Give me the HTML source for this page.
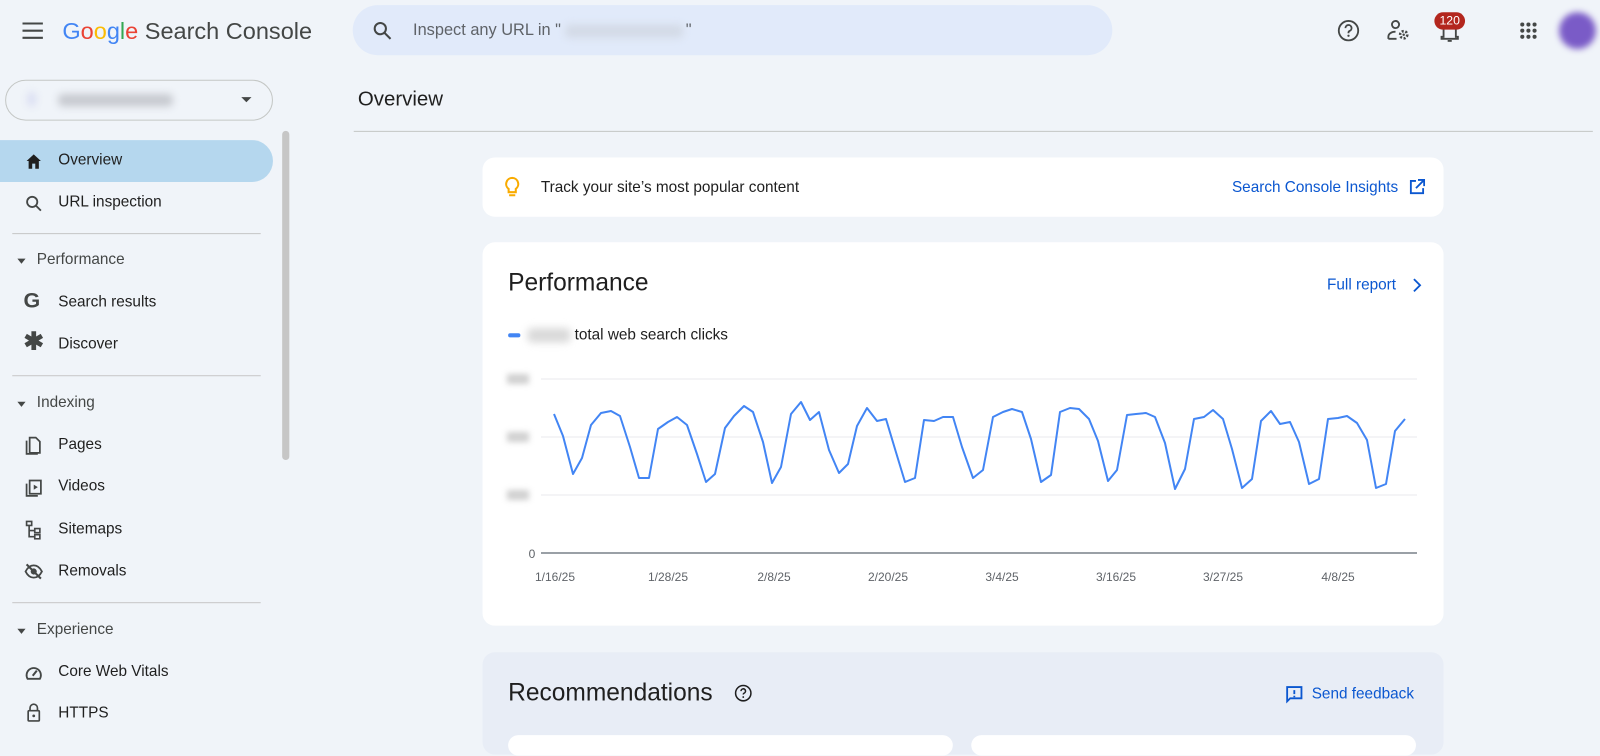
<!DOCTYPE html>
<html><head><meta charset="utf-8"><style>
*{box-sizing:border-box;margin:0;padding:0}
html,body{width:1600px;height:740px;overflow:hidden;background:#f0f4f9;font-family:"Liberation Sans",Arial,sans-serif;color:#1f1f1f}
#w{position:absolute;left:0;top:0;width:1565px;height:724px;transform:scale(1.02236);transform-origin:0 0}
.a{position:absolute}
.nav{position:absolute;left:57px;font-size:15px;color:#1f1f1f;white-space:nowrap}
.sec{position:absolute;left:36px;font-size:15px;color:#444746}
.ic{position:absolute;left:23px;width:20px;height:20px}
.car{position:absolute;left:17px;width:0;height:0;border-left:4px solid transparent;border-right:4px solid transparent;border-top:5px solid #444746}
.div{position:absolute;left:12px;width:243px;height:1px;background:#c7c7c7}
.card{position:absolute;background:#fff;border-radius:12px}
.blue{color:#0b57d0}
.blur{position:absolute;background:#c9ccd1;filter:blur(4px);border-radius:4px}
</style></head><body>
<div id="w">
<!-- header -->
<svg class="a" style="left:22px;top:21px" width="20" height="18" viewBox="0 0 20 18"><path d="M0 2h20M0 9h20M0 16h20" stroke="#444746" stroke-width="2"/></svg>
<div class="a" style="left:61px;top:17px;font-size:23px;white-space:nowrap"><span style="color:#4285f4">G</span><span style="color:#ea4335">o</span><span style="color:#fbbc05">o</span><span style="color:#4285f4">g</span><span style="color:#34a853">l</span><span style="color:#ea4335">e</span> <span style="color:#444746">Search Console</span></div>
<div class="a" style="left:345px;top:5px;width:743px;height:49px;border-radius:25px;background:#e1eafa"></div>
<svg class="a" style="left:364px;top:20px" width="20" height="20" viewBox="0 0 20 20"><circle cx="8" cy="8" r="5.5" fill="none" stroke="#444746" stroke-width="2"/><path d="M12 12l6 6" stroke="#444746" stroke-width="2"/></svg>
<div class="a" style="left:404px;top:21px;font-size:16px;color:#5f6368">Inspect any URL in "<span style="display:inline-block;width:122px"></span>"</div>
<div class="blur" style="left:553px;top:24px;width:115px;height:13px;background:#d3dae6"></div>
<svg class="a" style="left:1308px;top:19px" width="22" height="22" viewBox="0 0 22 22"><circle cx="11" cy="11" r="9.5" fill="none" stroke="#444746" stroke-width="1.8"/><path d="M8 8.5a3 3 0 1 1 4 2.8c-.8.4-1 .9-1 1.7v.5" fill="none" stroke="#444746" stroke-width="1.8"/><circle cx="11" cy="16" r="1.1" fill="#444746"/></svg>
<svg class="a" style="left:1356px;top:19px" width="24" height="22" viewBox="0 0 24 22"><circle cx="9" cy="5" r="3.5" fill="none" stroke="#444746" stroke-width="1.8"/><path d="M2 19v-2c0-3 3-5 7-5" fill="none" stroke="#444746" stroke-width="1.8"/><path d="M2 19h8" stroke="#444746" stroke-width="1.8"/><circle cx="17" cy="15" r="3.5" fill="none" stroke="#444746" stroke-width="2.5" stroke-dasharray="2 1.6"/><circle cx="17" cy="15" r="1.2" fill="#444746"/></svg>
<svg class="a" style="left:1407px;top:20px" width="22" height="22" viewBox="0 0 22 22"><path d="M5 16V9a6 6 0 0 1 12 0v7h2v2H3v-2z" fill="none" stroke="#444746" stroke-width="1.8"/><path d="M9 20h4" stroke="#444746" stroke-width="1.8"/></svg>
<div class="a" style="left:1403px;top:12px;width:30px;height:17px;border-radius:9px;background:#b3261e;color:#fff;font-size:12px;text-align:center;line-height:17px">120</div>
<svg class="a" style="left:1486px;top:21px" width="18" height="18" viewBox="0 0 18 18" fill="#444746"><circle cx="3" cy="3" r="2"/><circle cx="9" cy="3" r="2"/><circle cx="15" cy="3" r="2"/><circle cx="3" cy="9" r="2"/><circle cx="9" cy="9" r="2"/><circle cx="15" cy="9" r="2"/><circle cx="3" cy="15" r="2"/><circle cx="9" cy="15" r="2"/><circle cx="15" cy="15" r="2"/></svg>
<div class="a" style="left:1525px;top:12px;width:36px;height:36px;border-radius:50%;background:#7a5bc7;filter:blur(3px)"></div>
<!-- property -->
<div class="a" style="left:5px;top:78px;width:262px;height:40px;border:1px solid #c4c7c5;border-radius:20px"></div>
<div class="blur" style="left:27px;top:90px;width:8px;height:14px;background:#d8dcf2"></div>
<div class="blur" style="left:57px;top:92px;width:112px;height:12px;background:#c6c9cf"></div>
<div class="a" style="left:236px;top:95px;border-left:5px solid transparent;border-right:5px solid transparent;border-top:5px solid #444746"></div>
<!-- nav -->
<div class="a" style="left:0;top:137px;width:267px;height:41px;background:#b5d7ee;border-radius:0 21px 21px 0"></div>
<div class="a" style="left:276px;top:128px;width:7px;height:322px;background:#c6c6c6;border-radius:4px"></div>
<svg class="ic" style="top:148px" viewBox="0 0 20 20"><path d="M10 3l7 6.5h-2V17h-3.5v-5h-3v5H5V9.5H3z" fill="#1f1f1f"/></svg>
<div class="nav" style="top:148px;font-weight:500">Overview</div>
<svg class="ic" style="top:189px" viewBox="0 0 20 20"><circle cx="8.5" cy="8.5" r="5" fill="none" stroke="#444746" stroke-width="1.8"/><path d="M12 12l5 5" stroke="#444746" stroke-width="1.8"/></svg>
<div class="nav" style="top:189px">URL inspection</div>
<div class="div" style="top:228px"></div>
<div class="car" style="top:253px"></div><div class="sec" style="top:245px">Performance</div>
<div class="a" style="left:23px;top:283px;font-size:21px;font-weight:bold;color:#444746">G</div>
<div class="nav" style="top:287px">Search results</div>
<div class="a" style="left:23px;top:323px;font-size:24px;font-weight:bold;color:#444746;line-height:24px">✱</div>
<div class="nav" style="top:328px">Discover</div>
<div class="div" style="top:367px"></div>
<div class="car" style="top:393px"></div><div class="sec" style="top:385px">Indexing</div>
<svg class="ic" style="top:426px" viewBox="0 0 20 20"><path d="M6 2h6l4 4v11H6z M3 5v13h11" fill="none" stroke="#444746" stroke-width="1.7"/></svg>
<div class="nav" style="top:426px">Pages</div>
<svg class="ic" style="top:467px" viewBox="0 0 20 20"><path d="M6 3h11v13H6z M3 6v12h11" fill="none" stroke="#444746" stroke-width="1.7"/><path d="M10 7l4 2.5-4 2.5z" fill="#444746"/></svg>
<div class="nav" style="top:467px">Videos</div>
<svg class="ic" style="top:508px" viewBox="0 0 20 20"><path d="M3 2h5v4H3z M11 9h5v4h-5z M11 15h5v4h-5z M5.5 6v11H11 M5.5 11H11" fill="none" stroke="#444746" stroke-width="1.6"/></svg>
<div class="nav" style="top:509px">Sitemaps</div>
<svg class="ic" style="top:549px" viewBox="0 0 20 20"><path d="M2 10c2-4 5-6 8-6s6 2 8 6c-2 4-5 6-8 6s-6-2-8-6z" fill="none" stroke="#444746" stroke-width="1.8"/><circle cx="10" cy="10" r="3" fill="#444746"/><path d="M3 3l14 14" stroke="#444746" stroke-width="2"/></svg>
<div class="nav" style="top:550px">Removals</div>
<div class="div" style="top:589px"></div>
<div class="car" style="top:615px"></div><div class="sec" style="top:607px">Experience</div>
<svg class="ic" style="top:648px" viewBox="0 0 20 20"><path d="M4 16a7 7 0 1 1 12 0z" fill="none" stroke="#444746" stroke-width="1.8"/><path d="M9 13l4-5" stroke="#444746" stroke-width="2"/></svg>
<div class="nav" style="top:648px">Core Web Vitals</div>
<svg class="ic" style="top:687px" viewBox="0 0 20 22"><path d="M6 9V6a4 4 0 0 1 8 0v3" fill="none" stroke="#444746" stroke-width="1.8"/><rect x="4" y="9" width="12" height="11" rx="1" fill="none" stroke="#444746" stroke-width="1.8"/><circle cx="10" cy="14.5" r="1.5" fill="#444746"/></svg>
<div class="nav" style="top:689px">HTTPS</div>
<!-- main -->
<div class="a" style="left:350px;top:86px;font-size:20px;color:#1f1f1f">Overview</div>
<div class="a" style="left:346px;top:128px;width:1212px;height:1px;background:#c4c7c5"></div>
<div class="card" style="left:472px;top:154px;width:940px;height:58px"></div>
<svg class="a" style="left:492px;top:172px" width="18" height="24" viewBox="0 0 18 24"><path d="M9 2a6 6 0 0 0-3.5 10.8V16h7v-3.2A6 6 0 0 0 9 2z M6 19h6" fill="none" stroke="#f9ab00" stroke-width="2"/></svg>
<div class="a" style="left:529px;top:175px;font-size:15px">Track your site’s most popular content</div>
<div class="a blue" style="left:1205px;top:175px;font-size:15px">Search Console Insights</div>
<svg class="a" style="left:1378px;top:175px" width="16" height="16" viewBox="0 0 16 16"><path d="M7 2H2v12h12V9 M9 1h6v6 M15 1L7 9" fill="none" stroke="#0b57d0" stroke-width="1.8"/></svg>
<div class="card" style="left:472px;top:237px;width:940px;height:375px"></div>
<div class="a" style="left:497px;top:263px;font-size:24px">Performance</div>
<div class="a blue" style="left:1298px;top:270px;font-size:15px">Full report</div>
<svg class="a" style="left:1381px;top:271px" width="10" height="16" viewBox="0 0 10 16"><path d="M2 2l6 6-6 6" fill="none" stroke="#0b57d0" stroke-width="1.8"/></svg>
<div class="a" style="left:497px;top:326px;width:12px;height:4px;border-radius:2px;background:#4285f4"></div>
<div class="blur" style="left:516px;top:321px;width:42px;height:14px;background:#d9d9d9"></div>
<div class="a" style="left:562px;top:319px;font-size:15px">total web search clicks</div>
<div class="card" style="left:472px;top:638px;width:940px;height:100px;background:#e8edf6"></div>
<div class="a" style="left:497px;top:664px;font-size:24px">Recommendations</div>
<svg class="a" style="left:718px;top:669px" width="18" height="18" viewBox="0 0 18 18"><circle cx="9" cy="9" r="7.5" fill="none" stroke="#1f1f1f" stroke-width="1.5"/><path d="M6.8 7a2.2 2.2 0 1 1 3 2c-.6.3-.8.7-.8 1.3" fill="none" stroke="#1f1f1f" stroke-width="1.5"/><circle cx="9" cy="12.8" r=".9" fill="#1f1f1f"/></svg>
<svg class="a" style="left:1257px;top:670px" width="18" height="18" viewBox="0 0 18 18"><path d="M2 2h14v11H5l-3 3z" fill="none" stroke="#0b57d0" stroke-width="1.8"/><path d="M9 5v4M9 10.5v1.5" stroke="#0b57d0" stroke-width="1.8"/></svg>
<div class="a blue" style="left:1283px;top:670px;font-size:15px">Send feedback</div>
<div class="card" style="left:497px;top:719px;width:435px;height:20px"></div>
<div class="card" style="left:950px;top:719px;width:435px;height:20px"></div>
</div>
<!-- chart in real coords -->
<svg class="a" style="left:0;top:0" width="1600" height="740" viewBox="0 0 1600 740">
<g stroke="#e8eaed" stroke-width="1"><path d="M541 379H1417M541 437H1417M541 495H1417"/></g>
<path d="M541 553H1417" stroke="#9aa0a6" stroke-width="2"/>
<g fill="#d0d0d0" style="filter:blur(3px)"><rect x="507" y="374" width="22" height="10"/><rect x="507" y="432" width="22" height="10"/><rect x="507" y="490" width="22" height="10"/></g>
<g font-family="Liberation Sans, Arial, sans-serif" font-size="12" fill="#5f6368" text-anchor="middle">
<text x="532" y="558">0</text>
<text x="555" y="581">1/16/25</text><text x="668" y="581">1/28/25</text><text x="774" y="581">2/8/25</text><text x="888" y="581">2/20/25</text><text x="1002" y="581">3/4/25</text><text x="1116" y="581">3/16/25</text><text x="1223" y="581">3/27/25</text><text x="1338" y="581">4/8/25</text>
</g>
<polyline fill="none" stroke="#4285f4" stroke-width="2" stroke-linejoin="round" points="554,414 563,436 573,474 582,458 591,425 601,413 611,411 620,416 630,447 639,478 649,478 658,429 668,422 677,417 687,425 697,454 706,482 715,474 725,428 734,416 744,406 753,412 763,442 772,483 781,467 791,414 801,402 810,420 819,412 829,450 839,473 848,464 857,426 867,408 877,421 886,419 895,449 905,482 915,478 924,420 934,421 943,417 953,417 962,447 973,478 983,470 993,417 1003,412 1012,409 1022,412 1031,439 1041,482 1051,475 1060,412 1070,408 1079,409 1089,419 1098,441 1108,481 1117,470 1127,415 1136,414 1146,413 1155,417 1165,443 1175,489 1185,469 1194,419 1204,417 1213,410 1223,419 1232,449 1242,488 1252,479 1261,421 1271,411 1280,424 1290,422 1299,442 1309,484 1319,479 1328,419 1338,418 1347,416 1357,423 1367,440 1376,488 1386,484 1395,431 1405,419"/>
</svg>
</body></html>
